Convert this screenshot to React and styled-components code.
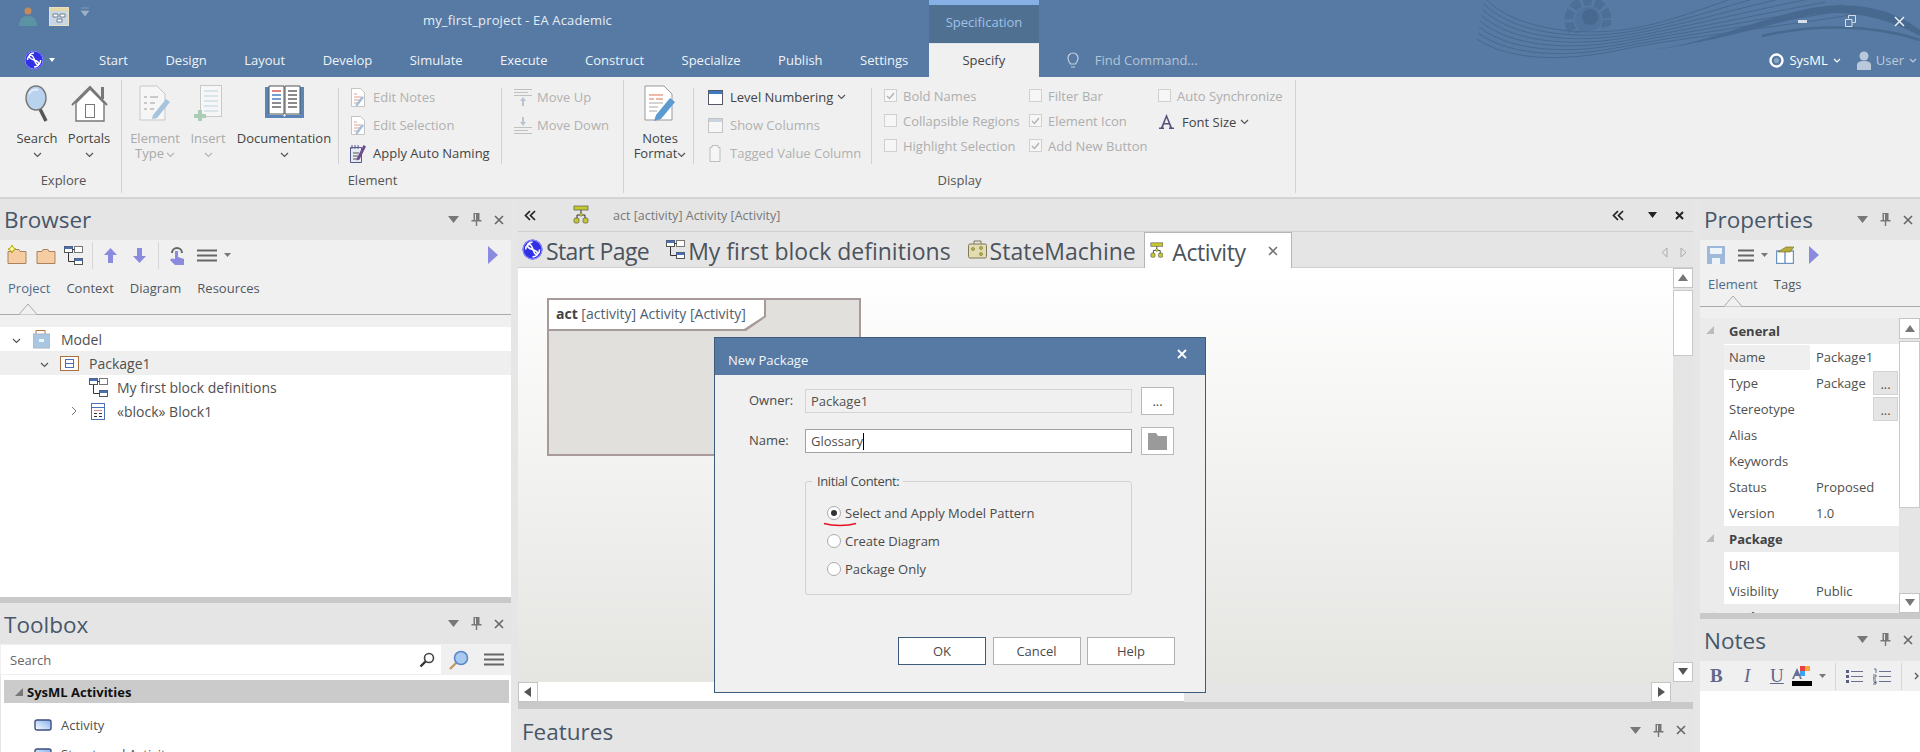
import React from "react"
import styled, { createGlobalStyle } from "styled-components"

const BLUE = "#567aa3"
const PURPLE = "#8a8adf"

const GlobalStyle = createGlobalStyle`
  html, body { margin: 0; padding: 0; background: #f0f0f0; }
  * { box-sizing: border-box; }
  body { font-family: "Open Sans", "Noto Sans", sans-serif; font-size: 13px; color: #444; overflow: hidden; }
`

const Page = styled.div`
  position: relative;
  width: 1920px;
  height: 752px;
  overflow: hidden;
  display: flex;
  flex-direction: column;
`

/* ---- title bar ---- */
const Header = styled.header`
  position: relative;
  height: 77px;
  background: ${BLUE};
  color: #fff;
  flex: none;
`
const Swoosh = styled.svg`
  position: absolute;
  left: 1472px;
  top: 0;
`
const TopRow = styled.div`
  position: relative;
  display: flex;
  height: 43px;
`
const QuickIcons = styled.div`
  display: flex;
  align-items: flex-start;
  gap: 12px;
  width: 423px;
  padding: 7px 0 0 19px;
`
const AppTitle = styled.div`
  width: 506px;
  line-height: 40px;
  color: #e6edf5;
  letter-spacing: 0.15px;
`
const ContextTab = styled.div`
  width: 110px;
  height: 43px;
  background: #4f7090;
  border-top: 5px solid #86b0e6;
  color: #9fc1ea;
  text-align: center;
  line-height: 35px;
`
const WindowButtons = styled.div`
  display: flex;
  align-items: center;
  height: 42px;
  margin-left: auto;
  padding-right: 15px;
  gap: 38px;
`
const TabRow = styled.nav`
  position: relative;
  display: flex;
  align-items: center;
  height: 34px;
  padding-left: 24px;
`
const AppMenu = styled.div`
  display: flex;
  align-items: center;
  gap: 5px;
  width: 75px;
`
const Tab = styled.div`
  margin-right: 37.5px;
  color: #eef3f8;
`
const ActiveTab = styled.div`
  width: 110px;
  height: 34px;
  margin-left: -17px;
  background: #f0f0f0;
  border-top: 1px solid #dfe5ec;
  color: #444;
  text-align: center;
  line-height: 33px;
`
const FindBox = styled.div`
  display: flex;
  align-items: center;
  gap: 16px;
  margin-left: 28px;
  color: #b3c4d8;
`
const Perspective = styled.div`
  display: flex;
  align-items: center;
  gap: 5px;
  margin-left: auto;
  color: ${p => (p.$dim ? "#bccbdc" : "#fff")};
  padding-right: ${p => (p.$dim ? "3px" : "16px")};
`
const PerspectiveRest = styled(Perspective)`
  margin-left: 0;
`

/* ---- ribbon ---- */
const Ribbon = styled.div`
  display: flex;
  height: 122px;
  flex: none;
  background: #f0f0f0;
  border-bottom: 2px solid #d4d4d4;
`
const Group = styled.section`
  position: relative;
  width: ${p => p.$w}px;
  height: 113px;
  margin-top: 3px;
  border-right: 1px solid #d2d2d2;
  flex: none;
  display: flex;
  flex-direction: column;
`
const GroupBody = styled.div`
  display: flex;
  height: 90px;
  padding-left: ${p => p.$pl || 0}px;
`
const GroupLabel = styled.div`
  text-align: center;
  line-height: 20px;
  padding-left: ${p => p.$pl || 0}px;
  color: #555;
`
const Big = styled.div`
  width: ${p => p.$w}px;
  margin-right: ${p => p.$mr || 0}px;
  display: flex;
  flex-direction: column;
  align-items: center;
  color: ${p => (p.$off ? "#aaa" : "#444")};
  line-height: 15px;
  flex: none;
`
const BigIcon = styled.div`
  height: 51px;
  padding-top: 5px;
`
const Chevron = styled.svg`
  display: inline-block;
  margin-left: ${p => p.$ml || 0}px;
  vertical-align: middle;
  flex: none;
`
const InnerSep = styled.div`
  width: 1px;
  height: 76px;
  margin: 8px ${p => p.$r}px 0 ${p => p.$l}px;
  background: #d2d2d2;
  flex: none;
`
const SmallCol = styled.div`
  width: ${p => p.$w}px;
  padding-top: ${p => p.$pt ?? 3}px;
  flex: none;
`
const Small = styled.div`
  display: flex;
  align-items: center;
  height: 28px;
  gap: 7px;
  white-space: nowrap;
  color: ${p => (p.$off ? "#b0b0b0" : "#444")};
`
const SmallIcon = styled.div`
  width: ${p => p.$w || 16}px;
  display: flex;
  justify-content: center;
  flex: none;
`
const MoveText = styled.span`
  margin-left: -2px;
`
const CheckRow = styled.div`
  display: flex;
  align-items: center;
  height: 25px;
  gap: 6px;
  white-space: nowrap;
  color: #aeaeae;
`
const CheckBox = styled.span`
  width: 13px;
  height: 13px;
  border: 1px solid #d0d0d0;
  background: #f6f6f6;
  display: flex;
  align-items: center;
  justify-content: center;
  flex: none;
`

/* ---- workspace ---- */
const Workspace = styled.main`
  flex: 1;
  display: flex;
  min-height: 0;
  background: #e6e6e6;
`
const Column = styled.div`
  width: ${p => p.$w}px;
  margin-right: ${p => p.$mr || 0}px;
  display: flex;
  flex-direction: column;
  flex: none;
  overflow: hidden;
`
const PaneHead = styled.div`
  display: flex;
  align-items: center;
  justify-content: space-between;
  height: ${p => p.$h || 41}px;
  padding: 0 7px 0 4px;
  background: #e5e5e5;
  flex: none;
`
const PaneTitle = styled.h2`
  margin: ${p => p.$mt || 0}px 0 0;
  font-size: 22.5px;
  line-height: 38px;
  font-weight: 400;
  color: #47576a;
`
const PaneControls = styled.div`
  display: flex;
  align-items: center;
  gap: 12px;
`
const Toolbar = styled.div`
  display: flex;
  align-items: center;
  height: 30px;
  padding-left: ${p => p.$pl || 7}px;
  background: #f0f0f0;
  flex: none;
`
const ToolSep = styled.div`
  width: 1px;
  height: 27px;
  background: #d6d6d6;
  margin: 0 ${p => p.$r}px 0 ${p => p.$l}px;
`
const Tool = styled.div`
  display: flex;
  margin-right: ${p => p.$mr || 0}px;
  margin-left: ${p => (p.$push ? "auto" : `${p.$ml || 0}px`)};
  margin-top: ${p => p.$mt || 0}px;
`
const SubTabs = styled.div`
  position: relative;
  display: flex;
  gap: 16px;
  height: ${p => p.$h}px;
  padding: ${p => p.$pt}px 0 0 8px;
  background: #f0f0f0;
  border-bottom: 1px solid #aaa;
  flex: none;
`
const SubTab = styled.span`
  color: ${p => (p.$on ? "#4d6c8c" : "#50585f")};
`
const Notch = styled.svg`
  position: absolute;
  left: ${p => p.$x}px;
  bottom: -1px;
`
const Gap = styled.div`
  height: ${p => p.$h}px;
  background: #f0f0f0;
  flex: none;
`
const Tree = styled.div`
  height: ${p => p.$h}px;
  background: #fff;
  flex: none;
`
const TreeRow = styled.div`
  display: flex;
  align-items: center;
  height: 24px;
  padding-left: ${p => p.$indent}px;
  background: ${p => (p.$sel ? "#efefef" : "#fff")};
  white-space: nowrap;
  font-size: 14px;
  color: #50504e;
`
const TreeArrow = styled.div`
  width: ${p => p.$w}px;
  flex: none;
`
const TreeIcon = styled.div`
  width: ${p => p.$w}px;
  display: flex;
  flex: none;
`
const Splitter = styled.div`
  height: ${p => p.$h}px;
  background: #c9c9c9;
  flex: none;
`
const SearchRow = styled.div`
  display: flex;
  align-items: center;
  height: 31px;
  padding: 1px 0 1px 1px;
  background: #f0f0f0;
  flex: none;
`
const SearchInput = styled.div`
  width: 440px;
  height: 29px;
  background: #fff;
  display: flex;
  align-items: center;
  justify-content: space-between;
  padding: 0 6px 0 9px;
  color: #666;
  margin-right: 8px;
`
const ToolList = styled.div`
  flex: 1;
  background: #fff;
  padding: 5px 0 0 3px;
  border-left: 1px solid #e5e5e5;
`
const ToolGroup = styled.div`
  display: flex;
  align-items: center;
  gap: 4px;
  width: 505px;
  height: 23px;
  margin-bottom: 7px;
  padding-left: 11px;
  background: #cbcbcb;
  color: #111;
  font-weight: 700;
`
const ToolItem = styled.div`
  display: flex;
  align-items: center;
  gap: 9px;
  height: 29px;
  padding-left: 30px;
  color: #50504e;
  white-space: nowrap;
`

/* ---- centre ---- */
const Breadcrumb = styled.div`
  display: flex;
  align-items: center;
  height: 33px;
  padding: 0 9px 0 6px;
  background: #e5e5e5;
  border-bottom: 1px solid #cfcfcf;
  flex: none;
  color: #777;
  font-size: 12.5px;
`
const DocTabs = styled.div`
  display: flex;
  align-items: flex-end;
  height: 36px;
  background: #e5e5e5;
  border-bottom: 1px solid #cfcfcf;
  flex: none;
  padding-left: 4px;
`
const DocTab = styled.div`
  display: flex;
  align-items: center;
  gap: 3px;
  height: 35px;
  margin-right: ${p => p.$mr || 0}px;
  font-size: 23px;
  letter-spacing: ${p => p.$ls || 0}px;
  color: #4c535c;
  white-space: nowrap;
`
const DocLabel = styled.span`
  padding-top: 3px;
  line-height: 30px;
`
const DocTabActive = styled(DocTab)`
  width: 148px;
  padding-left: 5px;
  margin-bottom: -1px;
  height: 36px;
  background: #fff;
  border: 1px solid #b5b5b5;
  border-bottom: 0;
  gap: 9px;
`
const DocArrows = styled.div`
  display: flex;
  gap: 12px;
  margin-left: auto;
  padding: 0 6px 9px 0;
`
const CanvasRow = styled.div`
  display: flex;
  height: 414px;
  flex: none;
`
const Canvas = styled.div`
  width: 1155px;
  padding: 30px 0 0 29px;
  background: linear-gradient(#fff, #e5e5e2);
`
const Frame = styled.div`
  width: 314px;
  height: 158px;
  background: #e2e0dd;
  border: 2px solid #a89a9a;
`
const FrameLabelEdge = styled.div`
  width: 217px;
  height: 31px;
  padding: 0 2px 2px 0;
  background: #a89a9a;
  clip-path: polygon(0 0, 100% 0, 100% 55%, calc(100% - 20px) 100%, 0 100%);
`
const FrameLabel = styled.div`
  height: 29px;
  padding-left: 7px;
  line-height: 28px;
  font-size: 14px;
  background: #fff;
  color: #50606f;
  white-space: nowrap;
  clip-path: polygon(0 0, 100% 0, 100% 55%, calc(100% - 20px) 100%, 0 100%);
  b { color: #444; }
`
const VScroll = styled.div`
  width: ${p => p.$w}px;
  display: flex;
  flex-direction: column;
  justify-content: space-between;
  background: #e5e5e5;
  flex: none;
`
const ScrollTop = styled.div`
  display: flex;
  flex-direction: column;
`
const ScrollBtn = styled.div`
  width: ${p => p.$w || 20}px;
  height: ${p => p.$h || 20}px;
  background: #fff;
  border: 1px solid #c4c4c4;
  display: flex;
  align-items: center;
  justify-content: center;
  flex: none;
`
const ScrollThumb = styled.div`
  height: ${p => p.$h}px;
  margin-top: 2px;
  background: #fff;
  border: 1px solid #c9c9c9;
`
const HScroll = styled.div`
  display: flex;
  align-items: stretch;
  height: 20px;
  background: #e5e5e5;
  flex: none;
`
const HThumb = styled.div`
  width: 646px;
  background: #fff;
  border-bottom: 1px solid #c9c9c9;
  margin-right: 467px;
`

/* ---- properties ---- */
const PropArea = styled.div`
  display: flex;
  height: 295px;
  background: #ebebeb;
  flex: none;
  overflow: hidden;
`
const Gutter = styled.div`
  width: 24px;
  flex: none;
`
const PropTable = styled.div`
  width: 175px;
  flex: none;
`
const PropHead = styled.div`
  position: relative;
  height: 26px;
  line-height: 27px;
  padding-left: 5px;
  font-weight: 700;
  color: #444;
  svg { position: absolute; left: -18px; top: 8px; }
`
const PropRow = styled.div`
  display: flex;
  align-items: center;
  height: 26px;
  background: #fff;
  color: #50504e;
`
const PropName = styled.div`
  width: 86px;
  height: 25px;
  line-height: 25px;
  padding-left: 5px;
  background: ${p => (p.$sel ? "#efefef" : "transparent")};
  flex: none;
`
const PropVal = styled.div`
  flex: 1;
  padding-left: 6px;
`
const MoreBtn = styled.div`
  width: 25px;
  height: 24px;
  margin-right: 1px;
  background: #e5e5e5;
  border: 1px solid #d2d2d2;
  text-align: center;
  line-height: 24px;
`
const NotesBody = styled.div`
  flex: 1;
  background: #fff;
`
const NotesBar = styled(Toolbar)`
  margin-top: 1px;
`
const NoteGlyph = styled.span`
  width: ${p => p.$w}px;
  font-family: "Liberation Serif", serif;
  font-size: 19px;
  line-height: 20px;
  color: #62668a;
  font-weight: ${p => (p.$bold ? 700 : 400)};
  font-style: ${p => (p.$italic ? "italic" : "normal")};
  text-decoration: ${p => (p.$under ? "underline" : "none")};
  flex: none;
`

/* ---- dialog ---- */
const Dialog = styled.div`
  position: absolute;
  left: 714px;
  top: 337px;
  width: 492px;
  height: 356px;
  background: #f0f0f0;
  border: 1px solid #3d5c7d;
  display: flex;
  flex-direction: column;
`
const DialogHead = styled.div`
  display: flex;
  justify-content: space-between;
  height: 37px;
  padding: 13px 18px 0 13px;
  background: ${BLUE};
  color: #f2f5f9;
  line-height: 18px;
  flex: none;
`
const DialogBody = styled.div`
  padding: 12px 31px 0 34px;
  display: flex;
  flex-direction: column;
`
const FieldRow = styled.div`
  display: flex;
  align-items: center;
  height: 28px;
  margin-bottom: 12px;
`
const FieldLabel = styled.label`
  width: 56px;
  margin-top: -2px;
  color: #4a4a4a;
  flex: none;
`
const Field = styled.div`
  width: 327px;
  height: 24px;
  padding-left: 5px;
  line-height: 23px;
  color: #50504e;
  background: ${p => (p.$off ? "#f0f0f0" : "#fff")};
  border: 1px solid ${p => (p.$off ? "#d4d4d4" : "#a2a2a2")};
`
const Caret = styled.span`
  display: inline-block;
  width: 1px;
  height: 17px;
  background: #000;
  vertical-align: -4px;
`
const MiniBtn = styled.div`
  width: 33px;
  height: 28px;
  margin-left: 9px;
  background: #fff;
  border: 1px solid #b8b8b8;
  display: flex;
  align-items: center;
  justify-content: center;
  line-height: 30px;
  flex: none;
`
const FieldSet = styled.fieldset`
  width: 327px;
  height: 122px;
  margin: 6px 0 0 56px;
  padding: 10px 0 0 21px;
  border: 1px solid #d2d2d2;
  border-radius: 3px;
  min-inline-size: 0;
`
const Legend = styled.legend`
  margin-left: -15px;
  padding: 0 4px 0 5px;
  color: #4a4a4a;
  line-height: 16px;
  letter-spacing: -0.4px;
`
const RadioRow = styled.div`
  position: relative;
  display: flex;
  align-items: center;
  gap: 4px;
  height: 28px;
  color: #4a4a4a;
`
const Radio = styled.span`
  width: 14px;
  height: 14px;
  border: 1px solid #aaa;
  border-radius: 50%;
  background: #fff;
  display: flex;
  align-items: center;
  justify-content: center;
  i { width: 6px; height: 6px; border-radius: 50%; background: #333; }
`
const RedMark = styled.svg`
  position: absolute;
  left: -4px;
  top: 23px;
`
const DialogButtons = styled.div`
  display: flex;
  justify-content: flex-end;
  gap: 6.5px;
  margin: 42px -1px 0 0;
`
const Btn = styled.div`
  width: 88px;
  height: 28px;
  text-align: center;
  line-height: 26px;
  background: #fff;
  color: #4a4a4a;
  border: 1px solid ${p => (p.$main ? "#3d5c7d" : "#b0b0b0")};
`

/* ---- icons ---- */
const Svg = ({ w, h, children, vb }) => (
  <svg width={w} height={h} viewBox={vb || `0 0 ${w} ${h}`} style={{ display: "block", flex: "none" }}>{children}</svg>
)
const Down = ({ off, ml }) => (
  <Chevron $ml={ml} width="9" height="6" viewBox="0 0 9 6">
    <path d="M1 1l3.5 3.5L8 1" fill="none" stroke={off ? "#b5b5b5" : "#555"} strokeWidth="1.2" />
  </Chevron>
)
const EaLogo = ({ s = 20 }) => (
  <Svg w={s} h={s} vb="0 0 20 20">
    <circle cx="10" cy="10" r="9.5" fill="#3030e4" />
    <path d="M10 3C6 3 4 6 6 8s6 2 8 4 0 5-4 5M3.500 10c0-4 3-6 5-4s2 6 4 8 4.500-1 4-4" fill="none" stroke="#fff" strokeWidth="1.500" />
    <circle cx="10" cy="10" r="9" fill="none" stroke="#8c8cff" strokeWidth="1" />
  </Svg>
)
const PaneDown = () => (
  <Svg w={11} h={7}><path d="M0 0h11L5.5 7z" fill="#777" /></Svg>
)
const Pin = () => (
  <Svg w={11} h={13}><path d="M2.5 0h6v7h2v1.5H6.2V13H4.8V8.5H.5V7h2zM4 1v6h1V1z" fill="#777" /></Svg>
)
const Cross = ({ c = "#666", s = 10, w = 1.6 }) => (
  <Svg w={s} h={s}><path d={`M1 1L${s - 1} ${s - 1}M${s - 1} 1L1 ${s - 1}`} stroke={c} strokeWidth={w} /></Svg>
)
const Controls = () => (
  <PaneControls><PaneDown /><Pin /><Cross /></PaneControls>
)
const Tri = ({ d = "up", c = "#777", s = 10 }) => {
  const p = { up: "M5 1l5 7H0z", down: "M0 1h10L5 8z", left: "M8 0v10L1 5z", right: "M2 0v10l7-5z" }
  return <Svg w={s} h={s} vb="0 0 10 10"><path d={p[d]} fill={c} /></Svg>
}
const Activity = ({ s = 1 }) => (
  <Svg w={16 * s} h={20 * s} vb="0 0 16 20">
    <rect x="1" y="1" width="14" height="4" fill="#c7c92a" stroke="#555" strokeWidth=".7" />
    <path d="M8 5v4M4 13v-3h8v3" fill="none" stroke="#333" />
    <path d="M8 7.500l2 2-2 2-2-2z" fill="#c7c92a" stroke="#555" strokeWidth=".5" />
    <rect x="1" y="13" width="5" height="5" rx="1.500" fill="#c7c92a" stroke="#555" strokeWidth=".7" />
    <rect x="10" y="13" width="5" height="5" rx="1.500" fill="#c7c92a" stroke="#555" strokeWidth=".7" />
  </Svg>
)
const DiagramIco = () => (
  <Svg w={19} h={19}>
    <rect x=".5" y=".5" width="8" height="6" fill="#fff" stroke="#555" />
    <rect x=".5" y=".5" width="8" height="2.500" fill="#4a70b8" />
    <rect x="10.500" y=".5" width="8" height="6" fill="#fff" stroke="#777" />
    <rect x="10.500" y="12.500" width="8" height="6" fill="#fff" stroke="#555" />
    <rect x="10.500" y="12.500" width="8" height="2.500" fill="#4a70b8" />
    <path d="M4.500 7v8.500h6M8.500 3.500h2" fill="none" stroke="#333" />
  </Svg>
)
const Folder = ({ star }) => (
  <Svg w={20} h={20}>
    <path d="M1 6.500h5l1-2h5l1 2h6v12H1z" fill="#f6cda3" stroke="#a9835f" />
    {star && <path d="M5 0l1.300 2.700L9 4 6.300 5.300 5 8 3.700 5.300 1 4l2.700-1.300z" fill="#fff8b0" stroke="#b5a800" />}
  </Svg>
)
const Bars = ({ w = 20, c = "#666" }) => (
  <Svg w={w} h={13}><path d={`M0 1.500h${w}M0 6.500h${w}M0 11.500h${w}`} stroke={c} strokeWidth="2" /></Svg>
)
const Play = () => <Svg w={10} h={18}><path d="M0 0l10 9-10 9z" fill={PURPLE} /></Svg>
const Arrow = ({ up }) => (
  <Svg w={13} h={15}>
    <path d={up ? "M6.500 0L13 7H9v8H4V7H0z" : "M6.500 15L13 8H9V0H4v8H0z"} fill={PURPLE} />
  </Svg>
)
const Hand = () => (
  <Svg w={16} h={21}>
    <path d="M3 8a5 5 0 0 1 10 0" fill="none" stroke="#666" strokeWidth="2" />
    <path d="M6 6h3v6l6 2v6H6l-5-5 1.500-1.500L6 14z" fill={PURPLE} />
  </Svg>
)
const SearchGlass = () => (
  <Svg w={16} h={16}>
    <circle cx="10" cy="6" r="4.500" fill="#fff" stroke="#444" strokeWidth="1.600" />
    <path d="M6.500 9.500L1.500 14.500" stroke="#333" strokeWidth="2.400" />
  </Svg>
)
const BlueGlass = () => (
  <Svg w={20} h={20}>
    <path d="M8 12L1 19" stroke="#c09a66" strokeWidth="2.400" />
    <circle cx="12" cy="8" r="6.500" fill="#a9c9ef" stroke="#5a88c8" strokeWidth="1.600" />
  </Svg>
)
const Doc = ({ c = "#aaa" }) => (
  <Svg w={14} h={19}>
    <path d="M.5 .5h9l4 4v14H.5z" fill="#fff" stroke={c} />
    <path d="M3 6h3M3 9h7M3 12h7M3 15h5" stroke="#e0a090" />
    <path d="M5 16l6-8 2 1.500-6 8-2.500 1z" fill="#9fc0de" />
  </Svg>
)
const Tick = () => (
  <Svg w={9} h={8}>
    <path d="M1 4l2.500 2.500L8 1" fill="none" stroke="#b0b0b0" strokeWidth="1.300" />
  </Svg>
)
const ActivityShape = () => (
  <Svg w={18} h={12}>
    <defs>
      <linearGradient id="act" x1="0" y1="1" x2="1" y2="0">
        <stop offset="0" stopColor="#fff" />
        <stop offset="1" stopColor="#7fb0ea" />
      </linearGradient>
    </defs>
    <rect x="1" y="1" width="16" height="10" rx="2" fill="url(#act)" stroke="#3d4d80" strokeWidth="1.400" />
  </Svg>
)

const swooshLines = [0, 1, 2, 3, 4, 5, 6, 7]

const App = () => (
  <Page>
    <GlobalStyle />
    <Header>
      <Swoosh width="448" height="60" viewBox="0 0 448 60">
        <defs>
          <clipPath id="gearClip">
            <path d="M80 33C100 36 130 30 160 18V0H80z" />
          </clipPath>
        </defs>
        <g clipPath="url(#gearClip)">
          <circle cx="116" cy="20" r="19" fill="none" stroke="#4c6f97" strokeWidth="9" strokeDasharray="9 3" />
          <circle cx="116" cy="20" r="13" fill="#4f739c" />
          <circle cx="118" cy="17" r="8" fill="#47698f" />
        </g>
        {swooshLines.map(i => (
          <path
            key={i}
            d={`M${12 - i} ${i * 6 - 3}C40 ${i * 5 + 28} 100 ${i * 3.5 + 36} 150 ${i * 2.8 + 30}S${260 + i * 10} ${i * 4 - 4} ${290 + i * 16} ${i * 3 - 10}`}
            fill="none"
            stroke="#47698f"
            strokeWidth="1"
          />
        ))}
        <path d="M180 50c50-6 100-28 150-40 46-10 86-4 118 20v6C412 16 372 8 334 16 284 28 230 44 180 50z" fill="#47698f" />
        <path d="M290 36c50-12 110-12 158 4" fill="none" stroke="#47698f" strokeWidth="2.500" />
      </Swoosh>
      <TopRow>
        <QuickIcons>
          <Svg w={18} h={19}>
            <circle cx="9" cy="4" r="3.500" fill="#c48a5c" />
            <path d="M0 19c0-7 3-10 9-10s9 3 9 10z" fill="#5c93a4" />
          </Svg>
          <Svg w={20} h={19}>
            <rect x=".5" y=".5" width="19" height="18" fill="#c9d6e4" stroke="#e8e0c4" />
            <rect x="1" y="1" width="18" height="3" fill="#e6d9a8" />
            <path d="M4 7h5v3H4zM11 7h5v3h-5zM8 12h5v3H8z" fill="#fff" stroke="#6d7f94" />
          </Svg>
          <Svg w={8} h={9}><path d="M0 1h8M0 4h8L4 9z" fill="#9db0c5" stroke="#9db0c5" strokeWidth=".6" /></Svg>
        </QuickIcons>
        <AppTitle>my_first_project - EA Academic</AppTitle>
        <ContextTab>Specification</ContextTab>
        <WindowButtons>
          <Svg w={9} h={4}><rect width="9" height="3" y="1" fill="#d7e0ea" /></Svg>
          <Svg w={11} h={12}>
            <path d="M3.500 3.500v-3h7v7h-3M.5 4.500h6.500v7H.5z" fill="none" stroke="#d7e0ea" />
          </Svg>
          <Cross c="#e8eef4" s={11} w={1.5} />
        </WindowButtons>
      </TopRow>
      <TabRow>
        <AppMenu>
          <EaLogo />
          <Svg w={6} h={4}><path d="M0 0h6L3 4z" fill="#fff" /></Svg>
        </AppMenu>
        {["Start", "Design", "Layout", "Develop", "Simulate", "Execute", "Construct", "Specialize", "Publish", "Settings"].map(t => (
          <Tab key={t}>{t}</Tab>
        ))}
        <ActiveTab>Specify</ActiveTab>
        <FindBox>
          <Svg w={12} h={17}>
            <path d="M3.500 12C2 9.500 1 9 1 6a5 5 0 0 1 10 0c0 3-1 3.500-2.500 6zM4 15h4" fill="none" stroke="#c3d1e1" strokeWidth="1.200" />
          </Svg>
          Find Command...
        </FindBox>
        <Perspective>
          <Svg w={15} h={15}>
            <circle cx="7.500" cy="7.500" r="6" fill="none" stroke="#fff" strokeWidth="2.400" />
            <circle cx="7.500" cy="7.500" r="2.500" fill="#8aa5c4" />
          </Svg>
          SysML
          <Svg w={8} h={5}><path d="M1 1l3 3 3-3" fill="none" stroke="#fff" strokeWidth="1.200" /></Svg>
        </Perspective>
        <PerspectiveRest $dim>
          <Svg w={14} h={19}>
            <circle cx="7" cy="5" r="4.500" fill="#b9c9db" />
            <path d="M0 19v-5c0-3 3-4 7-4s7 1 7 4v5z" fill="#b9c9db" />
          </Svg>
          User
          <Svg w={8} h={5}><path d="M1 1l3 3 3-3" fill="none" stroke="#bccbdc" strokeWidth="1.200" /></Svg>
        </PerspectiveRest>
      </TabRow>
    </Header>

    <Ribbon>
      <Group $w={122}>
        <GroupBody $pl={14}>
          <Big $w={46} $mr={6}>
            <BigIcon>
              <Svg w={24} h={37}>
                <path d="M15 24l6 12" stroke="#555" strokeWidth="3.500" />
                <ellipse cx="11" cy="13" rx="10" ry="12" fill="#b9d2ee" stroke="#777" strokeWidth="1.400" />
                <path d="M4 9c2-4 6-5 9-4" stroke="#e4effa" strokeWidth="2" fill="none" />
              </Svg>
            </BigIcon>
            <span>Search</span>
            <span><Down /></span>
          </Big>
          <Big $w={46}>
            <BigIcon>
              <Svg w={39} h={37}>
                <path d="M2 20L20 2l17 18" fill="none" stroke="#777" strokeWidth="2" />
                <path d="M31 2h3v12h-3z" fill="#777" />
                <path d="M6 18v18h28V18L20 4z" fill="#fff" stroke="#777" strokeWidth="1.400" />
                <rect x="15.500" y="19.500" width="9" height="13" fill="#fff" stroke="#777" />
              </Svg>
            </BigIcon>
            <span>Portals</span>
            <span><Down /></span>
          </Big>
        </GroupBody>
        <GroupLabel $pl={6}>Explore</GroupLabel>
      </Group>

      <Group $w={502}>
        <GroupBody $pl={3}>
          <Big $w={60} $off $mr={3}>
            <BigIcon>
              <Svg w={32} h={36}>
                <path d="M1 1h17l8 8v26H1z" fill="#f6f6f6" stroke="#c8c8c8" />
                <path d="M5 12h3M11 12h8M5 18h3M11 18h5M5 24h3M11 24h4" stroke="#bbb" strokeWidth="1.400" />
                <path d="M14 30l13-16 4 3-13 16-5 1z" fill="#a6c4de" />
              </Svg>
            </BigIcon>
            <span>Element</span>
            <span>Type<Down off ml={2} /></span>
          </Big>
          <Big $w={40} $off $mr={6}>
            <BigIcon>
              <Svg w={28} h={36}>
                <rect x="6.500" y=".5" width="21" height="31" fill="#f6f6f6" stroke="#c8c8c8" />
                <path d="M10 6h14M10 11h14M10 16h14M10 21h14M10 26h14" stroke="#cfe0e6" strokeWidth="1.400" />
                <path d="M4 25h4v4h4v4H8v3H4v-3H0v-4h4z" fill="#a9cdb6" />
              </Svg>
            </BigIcon>
            <span>Insert</span>
            <span><Down off /></span>
          </Big>
          <Big $w={100}>
            <BigIcon>
              <Svg w={39} h={33}>
                <path d="M0 2h4v28h14l1.500 2L21 30h14V2h4v31H0z" fill="#5b85b8" />
                <path d="M4 1h15v28H4zM20 1h15v28H20z" fill="#fff" stroke="#555" />
                <path d="M7 6h9" stroke="#d04030" strokeWidth="1.300" />
                <path d="M7 10h9M7 14h9" stroke="#4a7fc0" strokeWidth="1.300" />
                <path d="M7 18h9M7 22h9M23 6h9M23 10h9M23 14h9M23 18h9M23 22h9" stroke="#666" strokeWidth="1.300" />
              </Svg>
            </BigIcon>
            <span>Documentation</span>
            <span><Down /></span>
          </Big>
          <InnerSep $l={4} $r={11} />
          <SmallCol $w={151}>
            <Small $off><SmallIcon><Doc c="#c4c4c4" /></SmallIcon>Edit Notes</Small>
            <Small $off><SmallIcon><Doc c="#c4c4c4" /></SmallIcon>Edit Selection</Small>
            <Small>
              <SmallIcon>
                <Svg w={16} h={19}>
                  <path d="M.5 3.500h11v15H.5z" fill="#e6eaf2" stroke="#555a88" />
                  <path d="M2 1v4M5 1v4M8 1v4" stroke="#5a5a90" />
                  <path d="M3 9h6M3 12h5M3 15h4" stroke="#555" />
                  <path d="M7 14L13.500 1 16 2.500 9.500 15.500l-3 1z" fill="#6b4c8f" />
                </Svg>
              </SmallIcon>
              Apply Auto Naming
            </Small>
          </SmallCol>
          <InnerSep $l={0} $r={12} />
          <SmallCol $w={110}>
            <Small $off>
              <SmallIcon $w={18}>
                <Svg w={18} h={19}>
                  <path d="M0 1.500h18M0 4.500h14M0 7.500h18" stroke="#c0c0c0" />
                  <path d="M9 9l3 4h-2v5H8v-5H6z" fill="#b8c4d4" />
                </Svg>
              </SmallIcon>
              <MoveText>Move Up</MoveText>
            </Small>
            <Small $off>
              <SmallIcon $w={18}>
                <Svg w={18} h={19}>
                  <path d="M0 11.500h18M0 14.500h14M0 17.500h18" stroke="#c0c0c0" />
                  <path d="M9 10l3-4h-2V1H8v5H6z" fill="#b8c4d4" />
                </Svg>
              </SmallIcon>
              <MoveText>Move Down</MoveText>
            </Small>
          </SmallCol>
        </GroupBody>
        <GroupLabel>Element</GroupLabel>
      </Group>

      <Group $w={672}>
        <GroupBody $pl={3}>
          <Big $w={66}>
            <BigIcon>
              <Svg w={32} h={36}>
                <path d="M1 1h19l8 8v26H1z" fill="#fff" stroke="#999" />
                <path d="M5 10h14M5 14h5M12 14h7" stroke="#e07050" strokeWidth="1.200" />
                <path d="M5 18h14M5 22h9M5 26h8" stroke="#aaa" strokeWidth="1.200" />
                <path d="M12 30l14-17 5 4-14 17-7 2z" fill="#5c9ad0" />
              </Svg>
            </BigIcon>
            <span>Notes</span>
            <span>Format<Down ml={0} /></span>
          </Big>
          <InnerSep $l={0} $r={13} />
          <SmallCol $w={164}>
            <Small>
              <SmallIcon>
                <Svg w={15} h={15}>
                  <rect x=".5" y=".5" width="14" height="14" fill="#fff" stroke="#555a66" />
                  <rect x="1" y="1" width="13" height="3" fill="#3f7ac2" />
                </Svg>
              </SmallIcon>
              Level Numbering<Down ml={-3} />
            </Small>
            <Small $off>
              <SmallIcon>
                <Svg w={15} h={15}>
                  <rect x=".5" y=".5" width="14" height="14" fill="#f6f6f6" stroke="#c4c4c4" />
                  <rect x="1" y="1" width="13" height="3" fill="#c8d4e0" />
                </Svg>
              </SmallIcon>
              Show Columns
            </Small>
            <Small $off>
              <SmallIcon>
                <Svg w={12} h={18}>
                  <path d="M3 1.500h6v2h2v14H1v-14h2z" fill="#f6f6f6" stroke="#bdbdbd" />
                </Svg>
              </SmallIcon>
              Tagged Value Column
            </Small>
          </SmallCol>
          <InnerSep $l={0} $r={12} />
          <SmallCol $w={145} $pt={3}>
            <CheckRow><CheckBox><Tick /></CheckBox>Bold Names</CheckRow>
            <CheckRow><CheckBox />Collapsible Regions</CheckRow>
            <CheckRow><CheckBox />Highlight Selection</CheckRow>
          </SmallCol>
          <SmallCol $w={129} $pt={3}>
            <CheckRow><CheckBox />Filter Bar</CheckRow>
            <CheckRow><CheckBox><Tick /></CheckBox>Element Icon</CheckRow>
            <CheckRow><CheckBox><Tick /></CheckBox>Add New Button</CheckRow>
          </SmallCol>
          <SmallCol $w={130} $pt={3}>
            <CheckRow><CheckBox />Auto Synchronize</CheckRow>
            <Small>
              <Svg w={17} h={16}><path d="M8.500 0L14 13.500h2V15h-5v-1.500h1L11 10.500H6l-1 3h1V15H1v-1.500h2zM6.500 9h4L8.500 4z" fill="#574f7a" /></Svg>
              Font Size<Down ml={-3} />
            </Small>
          </SmallCol>
        </GroupBody>
        <GroupLabel>Display</GroupLabel>
      </Group>
    </Ribbon>

    <Workspace>
      <Column $w={511} $mr={7}>
        <PaneHead><PaneTitle>Browser</PaneTitle><Controls /></PaneHead>
        <Toolbar>
          <Tool $mr={9}><Folder star /></Tool>
          <Tool $mr={8}><Folder /></Tool>
          <DiagramIco />
          <ToolSep $l={9} $r={11} />
          <Tool $mr={16}><Arrow up /></Tool>
          <Arrow />
          <ToolSep $l={12} $r={10} />
          <Tool $mr={12}><Hand /></Tool>
          <Bars />
          <Tool $ml={7}><Svg w={7} h={4}><path d="M0 0h7L3.500 4z" fill="#777" /></Svg></Tool>
          <Tool $ml={257}><Play /></Tool>
        </Toolbar>
        <SubTabs $h={45} $pt={9}>
          <SubTab $on>Project</SubTab>
          <SubTab>Context</SubTab>
          <SubTab>Diagram</SubTab>
          <SubTab>Resources</SubTab>
          <Notch $x={18} width="20" height="12" viewBox="0 0 20 12">
            <path d="M0 11.500h1L10 1l9 10.500h1" fill="#f0f0f0" stroke="#aaa" />
          </Notch>
        </SubTabs>
        <Gap $h={12} />
        <Tree $h={270}>
          <TreeRow $indent={12}>
            <TreeArrow $w={21}><Down /></TreeArrow>
            <TreeIcon $w={28}>
              <Svg w={17} h={19}>
                <path d="M3 4V.5h9V4" fill="none" stroke="#b0703a" />
                <path d="M0 4h17v14H0z" fill="#a9c6e2" stroke="#a9b6c6" />
                <rect x="6" y="9" width="5" height="3" fill="#eef4fa" />
              </Svg>
            </TreeIcon>
            Model
          </TreeRow>
          <TreeRow $indent={40} $sel>
            <TreeArrow $w={20}><Down /></TreeArrow>
            <TreeIcon $w={29}>
              <Svg w={19} h={15}>
                <rect x=".5" y=".5" width="18" height="14" fill="#fff" stroke="#a9703f" />
                <rect x="5.500" y="3.500" width="8" height="8" fill="#fff" stroke="#4a70b8" />
                <path d="M5.500 7.500h8" stroke="#4a70b8" />
              </Svg>
            </TreeIcon>
            Package1
          </TreeRow>
          <TreeRow $indent={89}>
            <TreeIcon $w={28}><DiagramIco /></TreeIcon>
            My first block definitions
          </TreeRow>
          <TreeRow $indent={71}>
            <TreeArrow $w={20}>
              <Svg w={6} h={10}><path d="M1 1l4 4-4 4" fill="none" stroke="#777" /></Svg>
            </TreeArrow>
            <TreeIcon $w={26}>
              <Svg w={14} h={17}>
                <rect x=".5" y=".5" width="13" height="16" fill="#fff" stroke="#4a70b8" />
                <path d="M1 4.500h12" stroke="#4a70b8" />
                <path d="M3 7.500h8" stroke="#e08a80" />
                <path d="M3 10.500h3M8 10.500h3M3 13.500h3M8 13.500h3" stroke="#333" />
              </Svg>
            </TreeIcon>
            «block» Block1
          </TreeRow>
        </Tree>
        <Splitter $h={6} />
        <PaneHead><PaneTitle $mt={2}>Toolbox</PaneTitle><Controls /></PaneHead>
        <SearchRow>
          <SearchInput>Search<SearchGlass /></SearchInput>
          <Tool $mr={15}><BlueGlass /></Tool>
          <Bars />
        </SearchRow>
        <ToolList>
          <ToolGroup>
            <Svg w={8} h={8}><path d="M8 0v8H0z" fill="#777" /></Svg>
            SysML Activities
          </ToolGroup>
          <ToolItem><ActivityShape />Activity</ToolItem>
          <ToolItem><ActivityShape />Structured Activity</ToolItem>
        </ToolList>
      </Column>

      <Column $w={1175} $mr={7}>
        <Breadcrumb>
          <Svg w={12} h={11}><path d="M6 1L1.500 5.500 6 10M11 1L6.500 5.500 11 10" fill="none" stroke="#222" strokeWidth="1.700" /></Svg>
          <Tool $ml={37} $mr={24}><Activity /></Tool>
          act [activity] Activity [Activity]
          <Tool $push>
            <Svg w={12} h={11}><path d="M6 1L1.500 5.500 6 10M11 1L6.500 5.500 11 10" fill="none" stroke="#222" strokeWidth="1.700" /></Svg>
          </Tool>
          <Tool $ml={24}><Svg w={9} h={6}><path d="M0 0h9L4.500 6z" fill="#222" /></Svg></Tool>
          <Tool $ml={18}><Cross c="#222" s={9} w={2} /></Tool>
        </Breadcrumb>
        <DocTabs>
          <DocTab $mr={17} $ls={-0.6}><EaLogo s={21} /><DocLabel>Start Page</DocLabel></DocTab>
          <DocTab $mr={17}><DiagramIco /><DocLabel>My first block definitions</DocLabel></DocTab>
          <DocTab $mr={8}>
            <Svg w={19} h={19}>
              <path d="M6 4V1h7v3" fill="none" stroke="#80795a" />
              <rect x=".5" y="4" width="18" height="14" rx="1.500" fill="#e3dcae" stroke="#80795a" />
              <circle cx="5" cy="9" r="1.500" fill="#bcc22a" stroke="#555" strokeWidth=".5" />
              <circle cx="13" cy="8" r="1.500" fill="#bcc22a" stroke="#555" strokeWidth=".5" />
              <circle cx="13" cy="14" r="1.500" fill="#bcc22a" stroke="#555" strokeWidth=".5" />
            </Svg>
            <DocLabel>StateMachine</DocLabel>
          </DocTab>
          <DocTabActive $ls={-0.4}>
            <Activity s={0.85} />
            <DocLabel>Activity</DocLabel>
            <Tool $ml={13}><Cross c="#777" s={10} w={1.6} /></Tool>
          </DocTabActive>
          <DocArrows>
            <Svg w={7} h={11}><path d="M6 1v9L1 5.500z" fill="none" stroke="#aaa" /></Svg>
            <Svg w={7} h={11}><path d="M1 1v9l5-4.500z" fill="none" stroke="#aaa" /></Svg>
          </DocArrows>
        </DocTabs>
        <CanvasRow>
          <Canvas>
            <Frame>
              <FrameLabelEdge>
                <FrameLabel><b>act</b> [activity] Activity [Activity]</FrameLabel>
              </FrameLabelEdge>
            </Frame>
          </Canvas>
          <VScroll $w={20}>
            <ScrollTop>
              <ScrollBtn><Tri d="up" /></ScrollBtn>
              <ScrollThumb $h={66} />
            </ScrollTop>
            <ScrollBtn><Tri d="down" c="#555" /></ScrollBtn>
          </VScroll>
        </CanvasRow>
        <HScroll>
          <ScrollBtn><Tri d="left" c="#555" /></ScrollBtn>
          <HThumb />
          <ScrollBtn><Tri d="right" c="#555" /></ScrollBtn>
        </HScroll>
        <Splitter $h={7} />
        <PaneHead $h={42}><PaneTitle $mt={3}>Features</PaneTitle><Controls /></PaneHead>
      </Column>

      <Column $w={220}>
        <PaneHead><PaneTitle>Properties</PaneTitle><Controls /></PaneHead>
        <Toolbar>
          <Tool $mr={13}>
            <Svg w={18} h={18}>
              <path d="M0 0h18v18H0z" fill="#9db8d8" />
              <rect x="3" y="2" width="12" height="6" fill="#eef3f9" />
              <rect x="5" y="12" width="8" height="6" fill="#eef3f9" />
            </Svg>
          </Tool>
          <Bars w={16} />
          <Tool $ml={7} $mr={8}><Svg w={7} h={4}><path d="M0 0h7L3.500 4z" fill="#777" /></Svg></Tool>
          <Tool $mr={15}>
            <Svg w={18} h={18}>
              <rect x=".5" y="5" width="17" height="12.500" fill="#fff" stroke="#6c93bd" strokeWidth="1.400" />
              <path d="M9 5v12" stroke="#6c93bd" strokeWidth="1.400" />
              <path d="M2 6l8-5 8 0-4 5z" fill="#b5ad3a" stroke="#6e6a20" strokeWidth=".6" />
            </Svg>
          </Tool>
          <Play />
        </Toolbar>
        <SubTabs $h={37} $pt={5}>
          <SubTab $on>Element</SubTab>
          <SubTab>Tags</SubTab>
          <Notch $x={23} width="20" height="12" viewBox="0 0 20 12">
            <path d="M0 11.500h1L10 1l9 10.500h1" fill="#f0f0f0" stroke="#aaa" />
          </Notch>
        </SubTabs>
        <Gap $h={11} />
        <PropArea>
          <Gutter />
          <PropTable>
            <PropHead>
              <Svg w={8} h={8}><path d="M8 0v8H0z" fill="#bbb" /></Svg>
              General
            </PropHead>
            <PropRow><PropName $sel>Name</PropName><PropVal>Package1</PropVal></PropRow>
            <PropRow><PropName>Type</PropName><PropVal>Package</PropVal><MoreBtn>...</MoreBtn></PropRow>
            <PropRow><PropName>Stereotype</PropName><PropVal /><MoreBtn>...</MoreBtn></PropRow>
            <PropRow><PropName>Alias</PropName></PropRow>
            <PropRow><PropName>Keywords</PropName></PropRow>
            <PropRow><PropName>Status</PropName><PropVal>Proposed</PropVal></PropRow>
            <PropRow><PropName>Version</PropName><PropVal>1.0</PropVal></PropRow>
            <PropHead>
              <Svg w={8} h={8}><path d="M8 0v8H0z" fill="#bbb" /></Svg>
              Package
            </PropHead>
            <PropRow><PropName>URI</PropName></PropRow>
            <PropRow><PropName>Visibility</PropName><PropVal>Public</PropVal></PropRow>
            <PropHead>
              <Svg w={8} h={8}><path d="M8 0v8H0z" fill="#bbb" /></Svg>
              Project
            </PropHead>
          </PropTable>
          <VScroll $w={21}>
            <ScrollTop>
              <ScrollBtn $w={21} $h={21}><Tri d="up" /></ScrollBtn>
              <ScrollThumb $h={167} />
            </ScrollTop>
            <ScrollBtn $w={21} $h={20}><Tri d="down" /></ScrollBtn>
          </VScroll>
        </PropArea>
        <Splitter $h={6} />
        <PaneHead><PaneTitle $mt={2}>Notes</PaneTitle><Controls /></PaneHead>
        <NotesBar $pl={10}>
          <NoteGlyph $w={34} $bold>B</NoteGlyph>
          <NoteGlyph $w={26} $italic>I</NoteGlyph>
          <NoteGlyph $w={22} $under>U</NoteGlyph>
          <Tool $mr={7}>
            <Svg w={20} h={20}>
              <path d="M5 2l5 11H8l-1-3H3l-1 3H0z" fill="#6a7090" />
              <rect x="8" y="0" width="5" height="5" fill="#e64040" />
              <rect x="13" y="0" width="5" height="5" fill="#f5a83c" />
              <rect x="8" y="5" width="5" height="5" fill="#3fa0f0" />
              <rect y="15" width="20" height="5" fill="#000" />
            </Svg>
          </Tool>
          <Svg w={7} h={4}><path d="M0 0h7L3.500 4z" fill="#777" /></Svg>
          <ToolSep $l={9} $r={10} />
          <Tool $mr={10}>
            <Svg w={17} h={15}>
              <path d="M0 1h3v3H0zM0 6h3v3H0zM0 11h3v3H0z" fill="#5a5f80" />
              <path d="M5 2.500h12M5 7.500h12M5 12.500h12" stroke="#6a7090" />
            </Svg>
          </Tool>
          <Svg w={18} h={17}>
            <path d="M6 3.500h12M6 8.500h12M6 13.500h12" stroke="#6a7090" />
            <path d="M1 1h2v4M0 7h3v2H0v2h3M0 13h3v1.500H1 3V16H0" fill="none" stroke="#5a5f80" strokeWidth=".9" />
          </Svg>
          <ToolSep $l={10} $r={12} />
          <Svg w={5} h={8}><path d="M1 1l3 3-3 3" fill="none" stroke="#555" strokeWidth="1.300" /></Svg>
        </NotesBar>
        <NotesBody />
      </Column>
    </Workspace>

    <Dialog>
      <DialogHead>
        New Package
        <Tool $mt={-2}><Cross c="#fff" s={10} w={1.8} /></Tool>
      </DialogHead>
      <DialogBody>
        <FieldRow>
          <FieldLabel>Owner:</FieldLabel>
          <Field $off>Package1</Field>
          <MiniBtn>...</MiniBtn>
        </FieldRow>
        <FieldRow>
          <FieldLabel>Name:</FieldLabel>
          <Field>Glossary<Caret /></Field>
          <MiniBtn>
            <Svg w={19} h={17}><path d="M0 0h8l2 3h9v14H0z" fill="#9a9a9a" /></Svg>
          </MiniBtn>
        </FieldRow>
        <FieldSet>
          <Legend>Initial Content:</Legend>
          <RadioRow>
            <Radio><i /></Radio>
            Select and Apply Model Pattern
            <RedMark width="34" height="6" viewBox="0 0 34 6">
              <path d="M1 1.500C10 4 24 4 33 1.500" fill="none" stroke="#e81123" strokeWidth="1.500" />
            </RedMark>
          </RadioRow>
          <RadioRow><Radio />Create Diagram</RadioRow>
          <RadioRow><Radio />Package Only</RadioRow>
        </FieldSet>
        <DialogButtons>
          <Btn $main>OK</Btn>
          <Btn>Cancel</Btn>
          <Btn>Help</Btn>
        </DialogButtons>
      </DialogBody>
    </Dialog>
  </Page>
)

export default App
